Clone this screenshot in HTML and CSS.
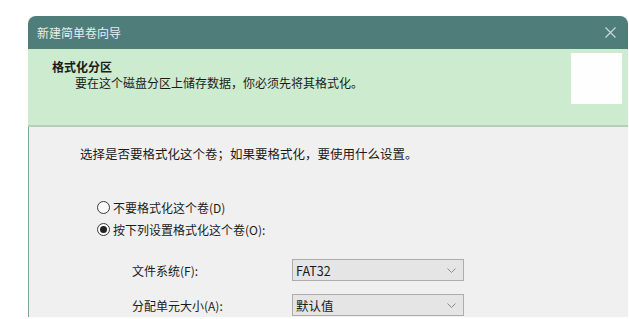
FILE: index.html
```html
<!DOCTYPE html>
<html lang="zh-CN">
<head>
    <meta charset="UTF-8">
    <meta name="viewport" content="width=device-width, initial-scale=1.0">
    <title>新建简单卷向导</title>
    <link rel="stylesheet" href="styles.css">
</head>
<body>
    <div class="window">
        <div class="titlebar">
            <span class="title">新建简单卷向导</span>
            <svg class="close" width="11" height="11" viewBox="0 0 11 11">
                <path d="M0.5 0.5 L10.5 10.5 M10.5 0.5 L0.5 10.5" stroke="#c9d8d6" stroke-width="1.2" fill="none"/>
            </svg>
        </div>

        <!-- wizard page header -->
        <div class="header">
            <div class="header-text">
                <div class="header-title">格式化分区</div>
                <div class="header-sub">要在这个磁盘分区上储存数据，你必须先将其格式化。</div>
            </div>
            <div class="header-icon"></div>
        </div>

        <div class="content">
            <p class="intro">选择是否要格式化这个卷；如果要格式化，要使用什么设置。</p>

            <label class="radio-row">
                <span class="radio"></span>
                <span>不要格式化这个卷(D)</span>
            </label>
            <label class="radio-row">
                <span class="radio checked"></span>
                <span>按下列设置格式化这个卷(O):</span>
            </label>

            <div class="form-row">
                <span class="form-label">文件系统(F):</span>
                <div class="select">
                    <span>FAT32</span>
                    <svg class="chevron" width="9" height="5" viewBox="0 0 9 5">
                        <path d="M0.5 0.5 L4.5 4.5 L8.5 0.5" stroke="#8a8a8a" stroke-width="1" fill="none"/>
                    </svg>
                </div>
            </div>
            <div class="form-row">
                <span class="form-label">分配单元大小(A):</span>
                <div class="select">
                    <span>默认值</span>
                    <svg class="chevron" width="9" height="5" viewBox="0 0 9 5">
                        <path d="M0.5 0.5 L4.5 4.5 L8.5 0.5" stroke="#8a8a8a" stroke-width="1" fill="none"/>
                    </svg>
                </div>
            </div>
        </div>
    </div>
</body>
</html>
```

FILE: styles.css
```css
body {
    margin: 0;
    padding: 0;
    background-color: #ffffff;
    font-family: "Noto Sans CJK SC", "Noto Sans", sans-serif;
    color: #1b1b1b;
    overflow: hidden;
}

.window {
    margin: 16px 0 0 28px;
    width: 600px;
    border-radius: 8px 8px 0 0;
    overflow: hidden;
}

.titlebar {
    height: 33px;
    background-color: #4f7e7a;
    color: #e6efee;
    display: flex;
    align-items: center;
    justify-content: space-between;
    padding: 0 12px 0 9px;
    font-size: 12px;
}

.close {
    margin-top: -1px;
}

.header {
    height: 76px;
    background-color: #cdebcf;
    border-bottom: 2px solid #b8cdb9;
    display: flex;
    justify-content: space-between;
}

.header-text {
    padding: 10px 0 0 24px;
    font-size: 12px;
    line-height: 16px;
}

.header-title {
    font-weight: bold;
}

.header-sub {
    padding-left: 23px;
}

.header-icon {
    width: 51px;
    height: 51px;
    margin: 4px 6px 0 0;
    background-color: #fdfefd;
}

.content {
    height: 172px;
    background-color: #f0f0f0;
    border-left: 1px solid #7fa3a0;
    padding: 18px 0 0 51px;
    font-size: 12.5px;
}

.intro {
    margin: 0 0 33px 0;
    line-height: 18px;
}

.radio-row {
    display: flex;
    align-items: center;
    gap: 3px;
    height: 22px;
    margin-left: 17px;
    font-size: 12px;
}

.radio {
    width: 11px;
    height: 11px;
    border: 1px solid #3a3a3a;
    border-radius: 50%;
    background-color: #fafafa;
    display: flex;
    align-items: center;
    justify-content: center;
}

.radio.checked::after {
    content: "";
    width: 7px;
    height: 7px;
    border-radius: 50%;
    background-color: #222;
}

.form-row {
    display: flex;
    align-items: center;
    margin-top: 13px;
    font-size: 12px;
}

.radio-row + .form-row {
    margin-top: 19px;
}

.form-label {
    width: 160px;
    padding-left: 52px;
}

.select {
    width: 167px;
    height: 20px;
    border: 1px solid #adadad;
    background-color: #e5e5e5;
    display: flex;
    align-items: center;
    justify-content: space-between;
    padding: 0 0 0 3px;
    font-size: 12.5px;
}

.chevron {
    margin-right: 7px;
}
```
